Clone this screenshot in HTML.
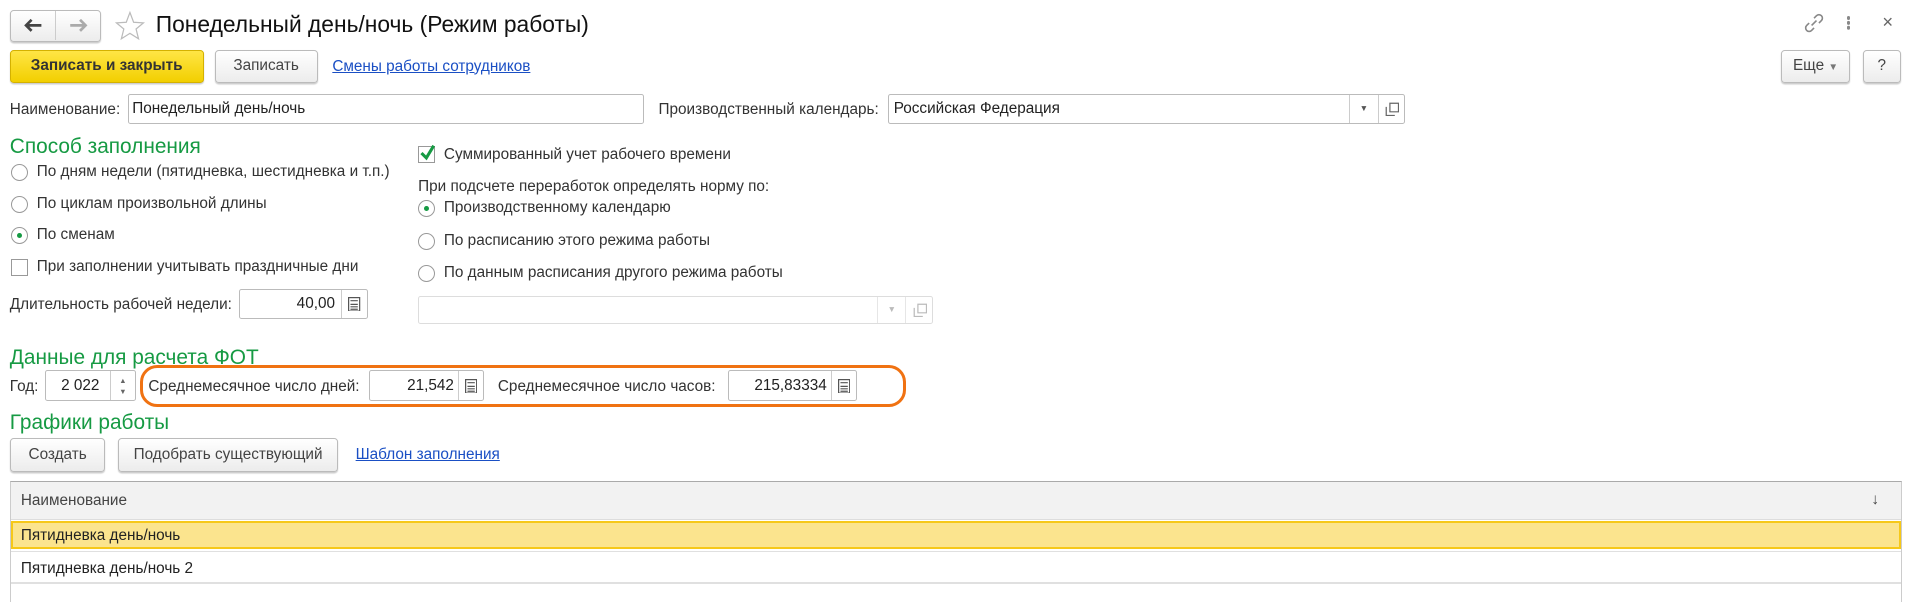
<!DOCTYPE html>
<html><head><meta charset="utf-8">
<style>
html,body{margin:0;padding:0;background:#fff;overflow:hidden}
body{width:1913px;height:602px}
#w{zoom:1.2263;position:relative;width:1560px;height:491px;font-family:"Liberation Sans",Arial,sans-serif;font-size:12.5px;color:#333}
.a{position:absolute;white-space:nowrap}
.btn{position:absolute;box-sizing:border-box;border:1px solid #bbb;border-radius:3px;background:linear-gradient(#fff,#ececec);box-shadow:0 1px 1px rgba(0,0,0,.2);text-align:center;color:#444}
.inp{position:absolute;box-sizing:border-box;border:1px solid #bbb;border-radius:2px;background:#fff}
.g{color:#169a43;font-size:17px}
.lnk{color:#1a4fc4;text-decoration:underline}
.rad{position:absolute;width:14px;height:14px;box-sizing:border-box;border:1px solid #999;border-radius:50%;background:#fff}
.rad.on::after{content:"";position:absolute;left:4px;top:4px;width:4px;height:4px;border-radius:50%;background:#169a43}
.chk{position:absolute;width:14px;height:14px;box-sizing:border-box;border:1px solid #999;background:#fff}
.calc{position:absolute;top:0;bottom:0;width:20px;border-left:1px solid #ccc}
</style></head><body><div id="w">
<div class="btn" style="left:8px;top:8px;width:74px;height:26px;border-radius:3px"></div>
<div class="a" style="left:45px;top:9px;width:1px;height:24px;background:#ccc"></div>
<svg class="a" style="left:19px;top:15px" width="16" height="12"><path d="M15 6H3M7 1.5L2.5 6L7 10.5" stroke="#444" stroke-width="2.2" fill="none"/></svg>
<svg class="a" style="left:56px;top:15px" width="16" height="12"><path d="M1 6H13M9 1.5L13.5 6L9 10.5" stroke="#aaa" stroke-width="2.2" fill="none"/></svg>
<svg class="a" style="left:93px;top:8px" width="26" height="26"><path d="M13 2L16 10L24 10.5L18 15.5L20 23.5L13 19L6 23.5L8 15.5L2 10.5L10 10Z" fill="none" stroke="#bbb" stroke-width="1"/></svg>
<div class="a" style="left:127px;top:9px;font-size:18.6px;color:#111">Понедельный день/ночь (Режим работы)</div>
<svg class="a" style="left:1470px;top:10px" width="18" height="18"><path d="M7 11L11 7M9 5l2-2a2.5 2.5 0 0 1 4 4l-2 2M9 13l-2 2a2.5 2.5 0 0 1-4-4l2-2" stroke="#888" stroke-width="1.3" fill="none"/></svg>
<div class="a" style="left:1506px;top:13px;width:3px;height:3px;background:#888;border-radius:50%;box-shadow:0 4px 0 #888,0 8px 0 #888"></div>
<div class="a" style="left:1535px;top:9px;color:#666;font-size:15px">×</div>
<div class="btn" style="left:8px;top:41px;width:158px;height:27px;line-height:25px;background:linear-gradient(#ffe545,#f2cf00);border-color:#d4b100;color:#333;font-weight:bold">Записать и закрыть</div>
<div class="btn" style="left:175px;top:41px;width:84px;height:27px;line-height:25px">Записать</div>
<div class="a lnk" style="left:271px;top:47px">Смены работы сотрудников</div>
<div class="btn" style="left:1452px;top:41px;width:57px;height:27px;line-height:25px">Еще <span style="font-size:8px;color:#777">▼</span></div>
<div class="btn" style="left:1519px;top:41px;width:31px;height:27px;line-height:25px">?</div>
<div class="a" style="left:8px;top:82px">Наименование:</div>
<div class="inp" style="left:104px;top:77px;width:421px;height:24px"><span class="a" style="left:3px;top:4px;color:#222">Понедельный день/ночь</span></div>
<div class="a" style="left:537px;top:82px">Производственный календарь:</div>
<div class="inp" style="left:724px;top:77px;width:422px;height:24px"><span class="a" style="left:4px;top:4px;color:#222">Российская Федерация</span>
<div class="calc" style="right:22px;width:22px;text-align:center;font-size:7px;line-height:22px;color:#555">▼</div>
<div class="calc" style="right:0;width:21px"><svg class="a" style="left:5px;top:5px" width="12" height="12"><path d="M4 1H11V8H4Z M1 4V11H8" stroke="#666" fill="none"/></svg></div></div>
<div class="a g" style="left:8px;top:110px">Способ заполнения</div>
<div class="rad" style="left:9px;top:134px"></div><div class="a" style="left:30px;top:133px">По дням недели (пятидневка, шестидневка и т.п.)</div>
<div class="rad" style="left:9px;top:160px"></div><div class="a" style="left:30px;top:159px">По циклам произвольной длины</div>
<div class="rad on" style="left:9px;top:185px"></div><div class="a" style="left:30px;top:184px">По сменам</div>
<div class="chk" style="left:9px;top:211px"></div><div class="a" style="left:30px;top:210px">При заполнении учитывать праздничные дни</div>
<div class="a" style="left:8px;top:241px">Длительность рабочей недели:</div>
<div class="inp" style="left:195px;top:236px;width:105px;height:24px"><span class="a" style="right:26px;top:4px;color:#222">40,00</span><div class="calc" style="right:0"><svg class="a" style="left:5px;top:5px" width="10" height="12"><rect x="0.5" y="0.5" width="9" height="11" fill="none" stroke="#555"/><path d="M2 3H8M2 6H8M2 8H8M2 10H8" stroke="#555"/></svg></div></div>
<div class="chk" style="left:341px;top:119px"></div>
<svg class="a" style="left:342px;top:116px" width="14" height="16"><path d="M2 9L6 13L12 3" stroke="#169a43" stroke-width="2.5" fill="none"/></svg>
<div class="a" style="left:362px;top:119px">Суммированный учет рабочего времени</div>
<div class="a" style="left:341px;top:145px">При подсчете переработок определять норму по:</div>
<div class="rad on" style="left:341px;top:163px"></div><div class="a" style="left:362px;top:162px">Производственному календарю</div>
<div class="rad" style="left:341px;top:190px"></div><div class="a" style="left:362px;top:189px">По расписанию этого режима работы</div>
<div class="rad" style="left:341px;top:216px"></div><div class="a" style="left:362px;top:215px">По данным расписания другого режима работы</div>
<div class="inp" style="left:341px;top:241px;width:420px;height:23px;border-color:#ddd"><div class="calc" style="right:22px;width:22px;border-color:#e6e6e6;text-align:center;font-size:7px;line-height:21px;color:#bbb">▼</div><div class="calc" style="right:0;width:21px;border-color:#e6e6e6"><svg class="a" style="left:5px;top:5px" width="12" height="12"><path d="M4 1H11V8H4Z M1 4V11H8" stroke="#bbb" fill="none"/></svg></div></div>
<div class="a g" style="left:8px;top:282px">Данные для расчета ФОТ</div>
<div class="a" style="left:8px;top:308px">Год:</div>
<div class="inp" style="left:37px;top:302px;width:74px;height:25px"><span class="a" style="left:12px;top:5px;color:#222">2 022</span><div class="calc" style="right:0;width:20px;font-size:6px;color:#666;text-align:center;line-height:9px;padding-top:3px">▲<br>▼</div></div>
<div class="a" style="left:114px;top:298px;width:625px;height:34px;box-sizing:border-box;border:2.5px solid #f07212;border-radius:14px"></div>
<div class="a" style="left:121px;top:308px">Среднемесячное число дней:</div>
<div class="inp" style="left:301px;top:302px;width:94px;height:25px"><span class="a" style="right:24px;top:5px;color:#222">21,542</span><div class="calc" style="right:0"><svg class="a" style="left:5px;top:6px" width="10" height="12"><rect x="0.5" y="0.5" width="9" height="11" fill="none" stroke="#555"/><path d="M2 3H8M2 6H8M2 8H8M2 10H8" stroke="#555"/></svg></div></div>
<div class="a" style="left:406px;top:308px">Среднемесячное число часов:</div>
<div class="inp" style="left:594px;top:302px;width:105px;height:25px"><span class="a" style="right:24px;top:5px;color:#222">215,83334</span><div class="calc" style="right:0"><svg class="a" style="left:5px;top:6px" width="10" height="12"><rect x="0.5" y="0.5" width="9" height="11" fill="none" stroke="#555"/><path d="M2 3H8M2 6H8M2 8H8M2 10H8" stroke="#555"/></svg></div></div>
<div class="a g" style="left:8px;top:335px">Графики работы</div>
<div class="btn" style="left:8px;top:357px;width:78px;height:28px;line-height:26px">Создать</div>
<div class="btn" style="left:96px;top:357px;width:180px;height:28px;line-height:26px">Подобрать существующий</div>
<div class="a lnk" style="left:290px;top:364px">Шаблон заполнения</div>
<div class="a" style="left:8px;top:392px;width:1543px;height:110px;box-sizing:border-box;border:1px solid #ccc;border-top-color:#aaa;border-bottom:none"></div>
<div class="a" style="left:9px;top:393px;width:1541px;height:30px;background:#f2f2f2;border-bottom:1px solid #ddd"></div>
<div class="a" style="left:17px;top:401px;color:#444">Наименование</div>
<div class="a" style="left:1526px;top:400px;color:#444">↓</div>
<div class="a" style="left:9px;top:425px;width:1541px;height:23px;box-sizing:border-box;background:#fbe48e;border:2px solid #f6c819"></div>
<div class="a" style="left:17px;top:430px;color:#222">Пятидневка день/ночь</div>
<div class="a" style="left:9px;top:449px;width:1541px;height:1px;background:#e0e0e0"></div>
<div class="a" style="left:17px;top:457px;color:#222">Пятидневка день/ночь 2</div>
<div class="a" style="left:9px;top:475px;width:1541px;height:1px;background:#e0e0e0"></div>
</div></body></html>
